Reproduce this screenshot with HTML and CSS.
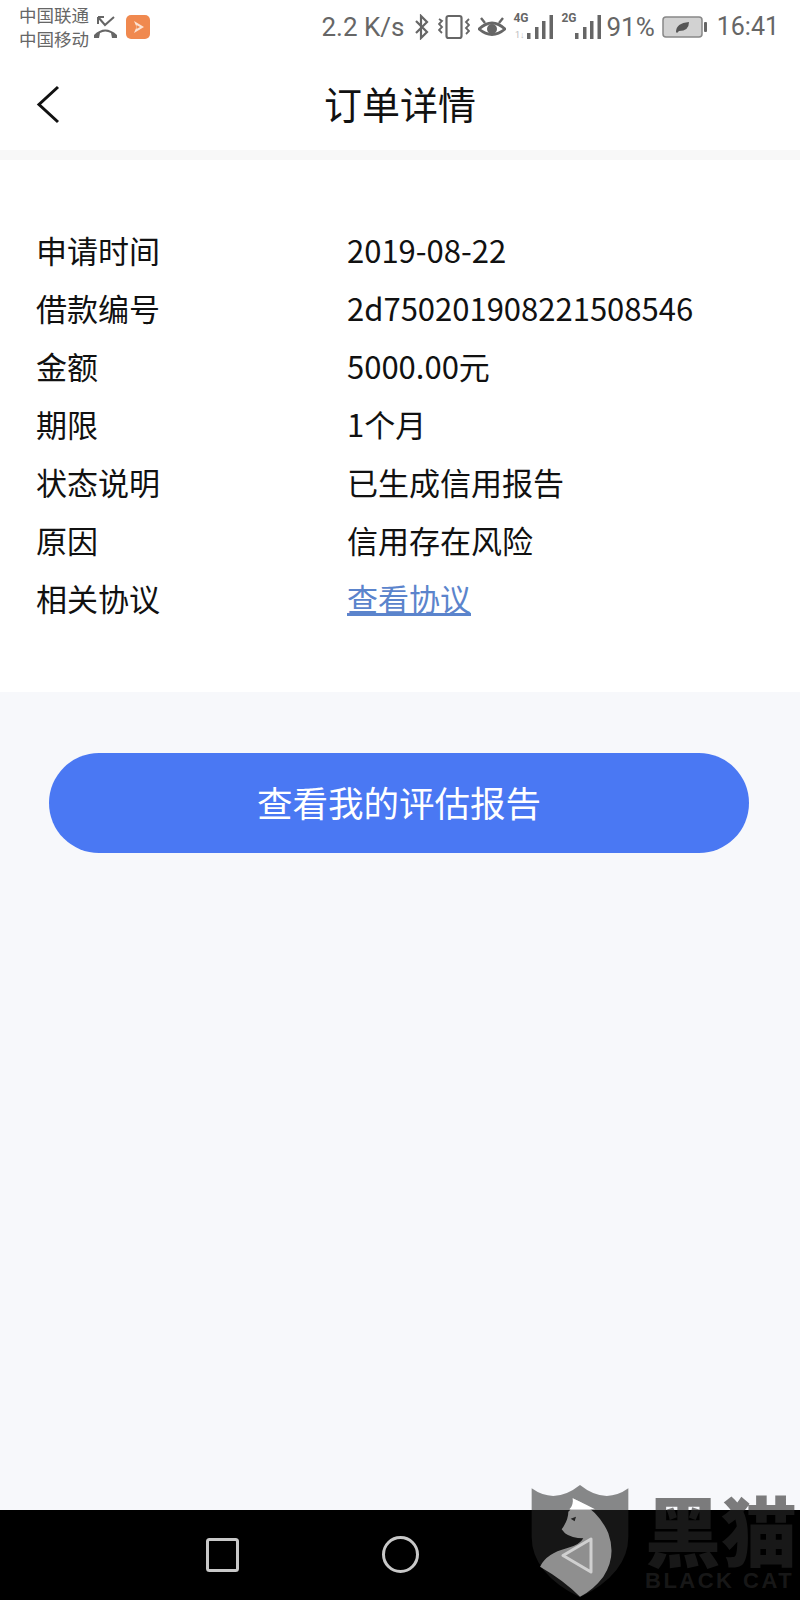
FILE: index.html
```html
<!DOCTYPE html>
<html lang="zh-CN">
<head>
    <meta charset="UTF-8">
    <meta name="viewport" content="width=device-width, initial-scale=1.0">
    <title>订单详情</title>
    <link rel="stylesheet" href="styles.css">
</head>
<body>
    <div class="page">
        <div class="status-bar">
            <div class="carrier">
                <span>中国联通</span>
                <span>中国移动</span>
            </div>
            <svg class="icon-call" width="25" height="24" viewBox="0 0 25 24">
                <path d="M5 2 L12 10 L21 2 M5 2 V9 M5 2 H11" fill="none" stroke="#666" stroke-width="2"/>
                <path d="M1 20 Q12 9 24 20 L24 23 L19 23 L18 18 Q12 15 7 18 L6 23 L1 23 Z" fill="#666"/>
            </svg>
            <svg class="icon-app" width="24" height="24" viewBox="0 0 24 24">
                <rect width="24" height="24" rx="5" fill="#f0894f"/>
                <path d="M8 6 L18 12 L8 18 L10.5 12 Z" fill="#fbe3d4"/>
                <path d="M10.5 10 L14 12 L10.5 14 Z" fill="#f0894f"/>
            </svg>
            <div class="status-right">
                <span class="speed">2.2 K/s</span>
                <svg class="icon-bt" width="16" height="26" viewBox="0 0 16 26">
                    <path d="M2 7 L13 18 L7 24 V2 L13 8 L2 19" fill="none" stroke="#666" stroke-width="2.2"/>
                </svg>
                <svg class="icon-vibrate" width="32" height="26" viewBox="0 0 32 26">
                    <rect x="8.5" y="2" width="15" height="22" rx="2" fill="none" stroke="#666" stroke-width="2.2"/>
                    <path d="M1 5 L4 7 L1 10 L4 13 L1 16 L4 19 M31 5 L28 8 L31 11 L28 14 L31 17 L28 20" fill="none" stroke="#666" stroke-width="1.8"/>
                </svg>
                <svg class="icon-eye" width="28" height="24" viewBox="0 0 28 24">
                    <path d="M1 14 Q14 2 27 14 Q14 25 1 14 Z" fill="none" stroke="#666" stroke-width="2.8"/>
                    <circle cx="14" cy="14" r="5" fill="#666"/>
                    <path d="M3 3 L7 8 M25 3 L21 8" stroke="#666" stroke-width="2.4"/>
                </svg>
                <div class="signal signal-4g">
                    <span class="net">4G</span>
                    <svg width="40" height="26" viewBox="0 0 40 26">
                        <text class="updown" x="2" y="24">1↓</text>
                        <rect x="14" y="19" width="3.5" height="6" fill="#666"/>
                        <rect x="22" y="13" width="3.5" height="12" fill="#666"/>
                        <rect x="29" y="7" width="3.5" height="18" fill="#666"/>
                        <rect x="36.5" y="1" width="3.5" height="24" fill="#666"/>
                    </svg>
                </div>
                <div class="signal signal-2g">
                    <span class="net">2G</span>
                    <svg width="40" height="26" viewBox="0 0 40 26">
                        <rect x="14" y="19" width="3.5" height="6" fill="#666"/>
                        <rect x="22" y="13" width="3.5" height="12" fill="#666"/>
                        <rect x="29" y="7" width="3.5" height="18" fill="#666"/>
                        <rect x="36.5" y="1" width="3.5" height="24" fill="#666"/>
                    </svg>
                </div>
                <span class="battery-text">91%</span>
                <svg class="icon-battery" width="46" height="22" viewBox="0 0 46 22">
                    <rect x="1" y="1" width="39" height="20" rx="3" fill="#d2d2d2" stroke="#888" stroke-width="1.5"/>
                    <rect x="42" y="6" width="3" height="10" rx="1" fill="#666"/>
                    <path d="M14 16 Q14 7 27 6 Q27 15 17 15 L15 17 Z" fill="#555"/>
                </svg>
                <span class="clock">16:41</span>
            </div>
        </div>

        <div class="nav-bar">
            <div class="nav-side">
                <svg width="24" height="39" viewBox="0 0 24 39">
                    <path d="M22 2 L3 19.5 L22 37" fill="none" stroke="#111" stroke-width="3"/>
                </svg>
            </div>
            <h1 class="nav-title">订单详情</h1>
            <div class="nav-side"></div>
        </div>
        <div class="nav-divider"></div>

        <div class="detail-card">
            <div class="detail-row"><span class="detail-label">申请时间</span><span>2019-08-22</span></div>
            <div class="detail-row"><span class="detail-label">借款编号</span><span>2d750201908221508546</span></div>
            <div class="detail-row"><span class="detail-label">金额</span><span>5000.00元</span></div>
            <div class="detail-row"><span class="detail-label">期限</span><span>1个月</span></div>
            <div class="detail-row"><span class="detail-label">状态说明</span><span>已生成信用报告</span></div>
            <div class="detail-row"><span class="detail-label">原因</span><span>信用存在风险</span></div>
            <div class="detail-row"><span class="detail-label">相关协议</span><a class="detail-link" href="#">查看协议</a></div>
        </div>

        <main class="content">
            <button class="report-btn">查看我的评估报告</button>
        </main>

        <div class="system-nav">
            <svg class="sys-square" width="33" height="34" viewBox="0 0 33 34">
                <rect x="1.5" y="1.5" width="30" height="31" rx="2" fill="none" stroke="#c8c8c8" stroke-width="3"/>
            </svg>
            <svg class="sys-circle" width="37" height="37" viewBox="0 0 37 37">
                <circle cx="18.5" cy="18.5" r="17" fill="none" stroke="#c8c8c8" stroke-width="3"/>
            </svg>
            <svg class="sys-back" width="32" height="37" viewBox="0 0 32 37">
                <path d="M30 2 V35 L2 18.5 Z" fill="none" stroke="#d0d0d0" stroke-width="3" stroke-linejoin="round"/>
            </svg>
        </div>

        <div class="watermark">
            <svg class="watermark-logo" width="300" height="130" viewBox="0 0 900 390">
                <path d="M95 55 Q165 105 240 45 Q315 105 385 55 L385 200 Q385 310 240 382 Q95 310 95 200 Z" fill="rgba(40,40,40,0.545)"/>
                <path d="M218 85 L240 95 Q300 130 325 190 Q350 260 310 320 Q280 360 240 380 Q190 330 120 290 Q140 250 200 235 Q240 225 250 205 Q215 205 195 190 L185 178 Q205 150 205 125 Q222 110 218 85 Z" fill="rgba(255,255,255,0.52)"/>
                <path d="M218 85 L240 95 Q262 105 285 118 L208 118 Q222 105 218 85 Z" fill="#fff"/>
                <path d="M212 146 L228 140 L224 154 Z" fill="#222"/>
            </svg>
            <div class="watermark-text">
                <span class="watermark-cn">黑猫</span>
                <span class="watermark-en">BLACK CAT</span>
            </div>
        </div>
    </div>
</body>
</html>
```

FILE: styles.css
```css
* {
    box-sizing: border-box;
}

body {
    margin: 0;
    padding: 0;
    font-family: "Noto Sans CJK SC", "Noto Sans", sans-serif;
    background: #f7f8fb;
    color: #111;
}

.page {
    position: relative;
    width: 800px;
    height: 1600px;
    display: flex;
    flex-direction: column;
    overflow: hidden;
}

/* status bar */
.status-bar {
    height: 60px;
    flex: none;
    display: flex;
    align-items: center;
    padding: 0 21px 0 19px;
    background: #fff;
    color: #666;
}

.carrier {
    display: flex;
    flex-direction: column;
    font-size: 17.5px;
    line-height: 24px;
    margin-top: -6px;
}

.icon-call {
    margin: -6px 0 0 4px;
}

.icon-app {
    margin: -6px 0 0 8px;
}

.status-right {
    display: flex;
    align-items: center;
    margin-left: auto;
    font-family: Roboto, "Noto Sans", sans-serif;
    font-size: 26px;
    margin-top: -7px;
}

.icon-bt {
    margin-left: 10px;
}

.icon-vibrate {
    margin-left: 8px;
}

.icon-eye {
    margin-left: 8px;
}

.signal {
    position: relative;
    width: 40px;
    height: 26px;
    margin-left: 7px;
}

.signal-2g {
    margin-left: 8px;
}

.signal svg {
    display: block;
}

.net {
    position: absolute;
    left: 0;
    top: -3px;
    font-size: 12px;
    font-weight: 700;
    line-height: 14px;
}

.updown {
    font-size: 9px;
    fill: #bbb;
}

.battery-text {
    margin-left: 5px;
}

.icon-battery {
    margin-left: 7px;
}

.clock {
    margin-left: 9px;
    font-size: 25px;
}

/* title bar */
.nav-bar {
    height: 90px;
    flex: none;
    display: grid;
    grid-template-columns: 1fr auto 1fr;
    align-items: center;
    padding: 0 36px;
    background: #fff;
}

.nav-side svg {
    display: block;
    margin-top: -2px;
}

.nav-title {
    margin: 0;
    font-size: 38px;
    font-weight: 400;
    line-height: 50px;
    position: relative;
    top: -2px;
}

.nav-divider {
    height: 10px;
    flex: none;
    background: #f8f8f8;
}

/* order details */
.detail-card {
    flex: none;
    padding: 60px 36px 66px;
    background: #fff;
}

.detail-row {
    display: flex;
    align-items: center;
    height: 58px;
    font-size: 31px;
}

.detail-label {
    width: 311px;
    flex: none;
}

.detail-link {
    color: #5b84cc;
    text-decoration: underline;
    text-underline-offset: 2px;
}

.content {
    flex: 1;
    padding: 61px 51px 0 49px;
}

.report-btn {
    display: block;
    width: 100%;
    height: 100px;
    padding: 0 0 4px;
    border: none;
    border-radius: 50px;
    background: #4a78f3;
    color: #fff;
    font-family: inherit;
    font-size: 35.5px;
}

/* android nav */
.system-nav {
    height: 90px;
    flex: none;
    position: relative;
    display: flex;
    align-items: center;
    background: #000;
    padding-left: 206px;
}

.sys-square {
    margin-top: -1px;
}

.sys-circle {
    margin: -1px 0 0 143px;
}

.sys-back {
    position: absolute;
    left: 561px;
    top: 27px;
    z-index: 2;
}

/* watermark lies over the page corner */
.watermark {
    position: absolute;
    right: 0;
    bottom: 0;
    width: 300px;
    height: 130px;
    z-index: 1;
}

.watermark-logo {
    position: absolute;
    left: 0;
    top: 0;
}

.watermark-text {
    display: flex;
    flex-direction: column;
    padding: 20px 0 0 145px;
    white-space: nowrap;
    color: rgba(40, 40, 40, 0.6);
}

.watermark-cn {
    font-size: 76px;
    font-weight: 900;
    line-height: 76px;
}

.watermark-en {
    font-family: "Liberation Sans", sans-serif;
    font-size: 22px;
    font-weight: 700;
    line-height: 24px;
    letter-spacing: 2.5px;
    margin-top: 3px;
}
```
